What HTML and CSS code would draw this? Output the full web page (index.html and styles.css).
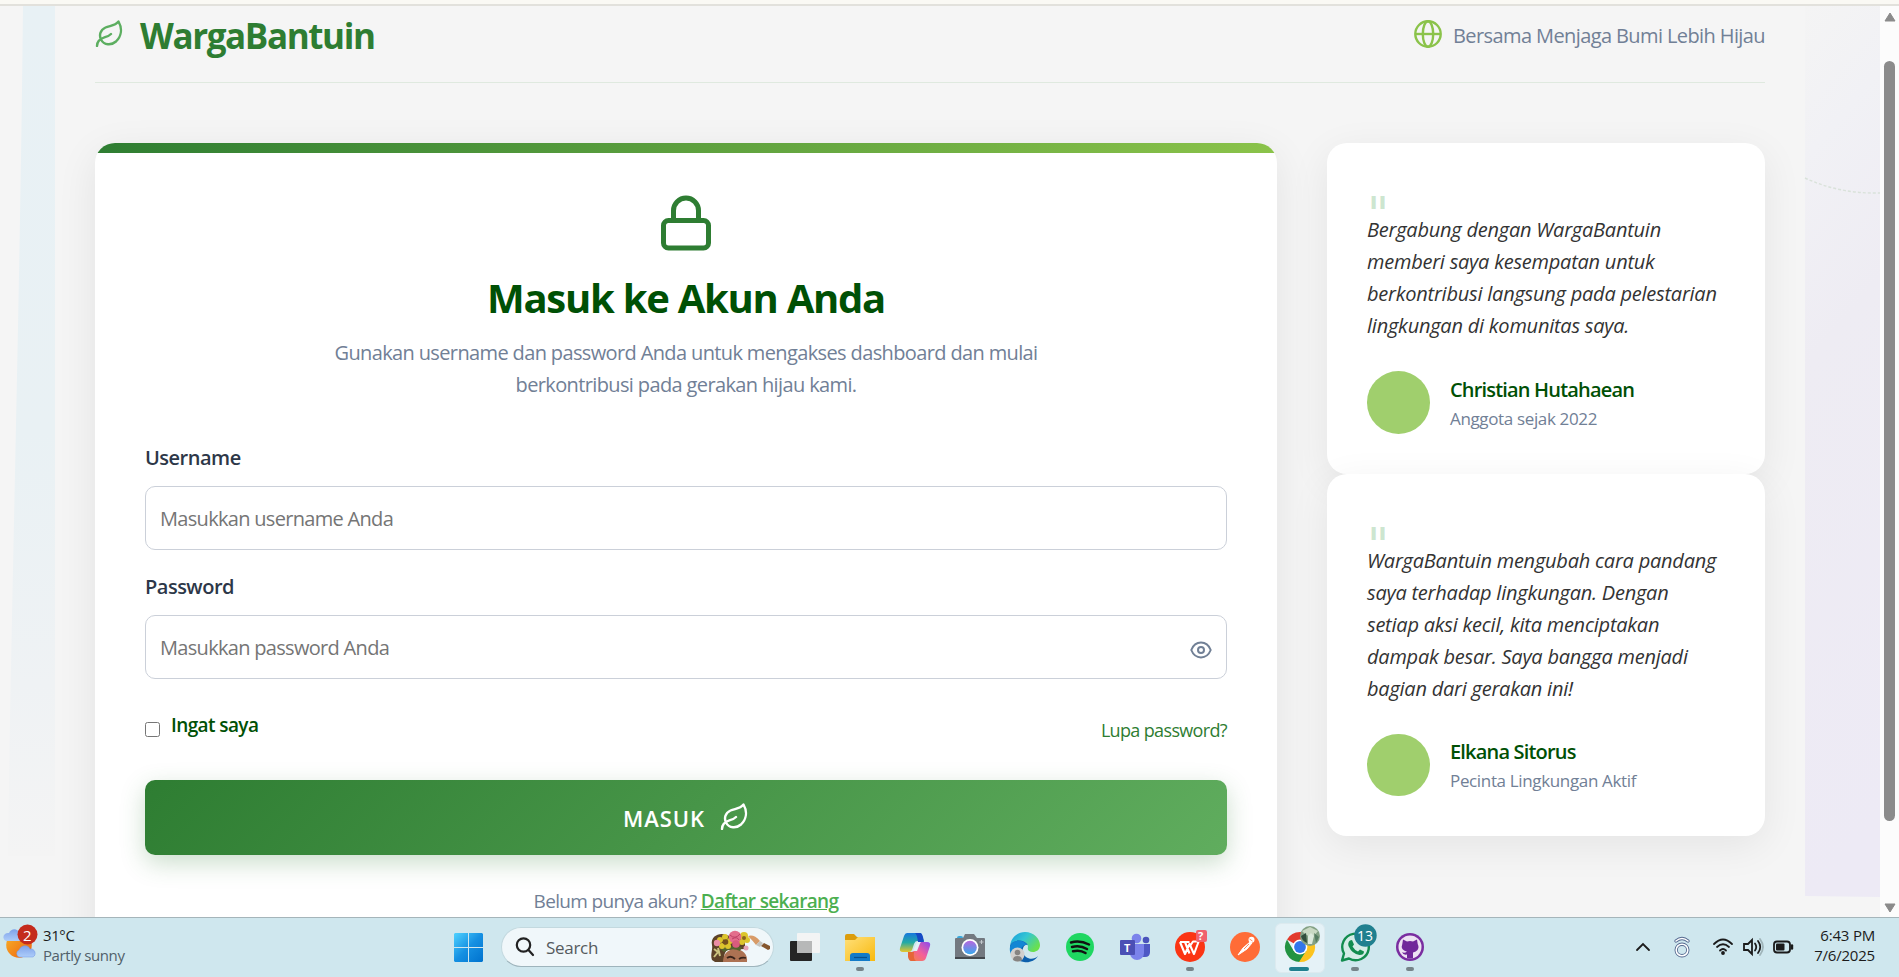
FILE: index.html
```html
<!DOCTYPE html>
<html lang="id">
<head>
<meta charset="utf-8">
<title>WargaBantuin</title>
<link rel="stylesheet" href="styles.css">
</head>
<body>
<div class="screen">
  <div class="chrome-edge"></div>
  <div class="viewport">
    <div class="page">
      <svg class="deco deco-left" viewBox="0 0 55 850" width="55" height="850">
        <defs><linearGradient id="dl" x1="0" y1="0" x2="0" y2="1"><stop offset="0" stop-color="#e8f1f5"/><stop offset=".5" stop-color="#e9f1f4"/><stop offset=".8" stop-color="#eff2f4"/><stop offset="1" stop-color="#f4f4f4"/></linearGradient></defs>
        <path d="M23 0H55V850H8C11 600 20 300 23 0Z" fill="url(#dl)"/>
      </svg>
      <svg class="deco deco-right" viewBox="0 0 75 891" width="75" height="891">
        <defs><linearGradient id="dr" x1="0" y1="0" x2=".1" y2="1"><stop offset="0" stop-color="#f4f4f4"/><stop offset=".17" stop-color="#f1f1f5"/><stop offset=".4" stop-color="#eeecf3"/><stop offset="1" stop-color="#edeaf5"/></linearGradient></defs>
        <path d="M0 0H75V891L0 890Z" fill="url(#dr)"/>
        <path d="M0 172Q34 188 75 187" fill="none" stroke="#d9e2da" stroke-width="1.4" stroke-dasharray="3 2"/>
      </svg>
      <header class="header">
        <div class="brand">
          <svg class="brand-icon" viewBox="0 0 28 28" width="28" height="28"><use href="#leaf"/></svg>
          <span class="brand-name">WargaBantuin</span>
        </div>
        <div class="tagline">
          <svg viewBox="0 0 28 28" width="28" height="28" fill="none" stroke="#8bc34a" stroke-width="2.4"><circle cx="14" cy="14" r="12.7"/><ellipse cx="14" cy="14" rx="5.2" ry="12.7"/><path d="M1.3 14H26.7"/></svg>
          <span class="tagline-text">Bersama Menjaga Bumi Lebih Hijau</span>
        </div>
      </header>
      <main class="main">
        <section class="login">
          <svg class="lock" viewBox="0 0 24 24" width="60" height="60" fill="none" stroke="#2e7d32" stroke-width="2" stroke-linecap="round" stroke-linejoin="round"><rect x="3" y="11" width="18" height="11" rx="2"/><path d="M7 11V7a5 5 0 0 1 10 0v4"/></svg>
          <h1 class="title">Masuk ke Akun Anda</h1>
          <p class="subtitle">Gunakan username dan password Anda untuk mengakses dashboard dan mulai<br>berkontribusi pada gerakan hijau kami.</p>
          <form class="form">
            <label class="label label-user">Username</label>
            <div class="field"><span class="placeholder">Masukkan username Anda</span></div>
            <label class="label label-pass">Password</label>
            <div class="field"><span class="placeholder">Masukkan password Anda</span>
              <svg class="eye" viewBox="0 0 22 18" width="22" height="18" fill="none" stroke="#718096" stroke-width="2"><path d="M1.300 9C3.200 4.200 6.800 1.600 11 1.600S18.800 4.200 20.700 9C18.800 13.800 15.200 16.400 11 16.400S3.200 13.800 1.300 9Z"/><circle cx="11" cy="9" r="3"/></svg>
            </div>
            <div class="options">
              <span class="remember"><input type="checkbox" class="check"><span class="remember-text">Ingat saya</span></span>
              <a class="forgot">Lupa password?</a>
            </div>
            <div class="submit"><span class="submit-text">MASUK</span><svg class="submit-icon" viewBox="0 0 28 28" width="28" height="28"><use href="#leaf"/></svg></div>
          </form>
          <p class="register"><span class="register-q">Belum punya akun?</span> <a class="register-link">Daftar sekarang</a></p>
        </section>
        <aside class="side">
          <article class="card">
            <div class="mark">"</div>
            <p class="quote">Bergabung dengan WargaBantuin<br>memberi saya kesempatan untuk<br>berkontribusi langsung pada pelestarian<br>lingkungan di komunitas saya.</p>
            <div class="author"><div class="avatar"></div><div><div class="name">Christian Hutahaean</div><div class="role">Anggota sejak 2022</div></div></div>
          </article>
          <article class="card">
            <div class="mark">"</div>
            <p class="quote">WargaBantuin mengubah cara pandang<br>saya terhadap lingkungan. Dengan<br>setiap aksi kecil, kita menciptakan<br>dampak besar. Saya bangga menjadi<br>bagian dari gerakan ini!</p>
            <div class="author"><div class="avatar"></div><div><div class="name">Elkana Sitorus</div><div class="role">Pecinta Lingkungan Aktif</div></div></div>
          </article>
        </aside>
      </main>
    </div>
    <div class="scrollbar">
      <svg class="arrow-up" viewBox="0 0 12 10" width="12" height="10"><path d="M6 1L11 9H1Z" fill="#8b8b8b" stroke="#8b8b8b" stroke-linejoin="round"/></svg>
      <div class="thumb"></div>
      <svg class="arrow-down" viewBox="0 0 12 10" width="12" height="10"><path d="M6 9L11 1H1Z" fill="#8b8b8b" stroke="#8b8b8b" stroke-linejoin="round"/></svg>
    </div>
  </div>
  <footer class="taskbar">
    <div class="weather">
      <svg viewBox="0 0 36 40" width="36" height="40"><defs><linearGradient id="sun" x1="0" y1="0" x2="1" y2="1"><stop offset="0" stop-color="#f7b52c"/><stop offset="1" stop-color="#ee5f0c"/></linearGradient><linearGradient id="cl" x1="0" y1="0" x2="0" y2="1"><stop offset="0" stop-color="#7fa2ea"/><stop offset="1" stop-color="#adcdfa"/></linearGradient></defs>
      <circle cx="16" cy="25" r="12.800" fill="url(#sun)"/><path d="M3 21a4 4 0 0 1-1-7 5 5 0 0 1 4-1c2-5 9-5 10 0 5 0 6 7 2 8Z" fill="url(#cl)"/><path d="M16 37a3.800 3.800 0 0 1 0-7c2-5 9-6 11-1 5-1 7 6 3 8Z" fill="url(#cl)" stroke="#7096e4" stroke-width=".5"/>
      <circle cx="24.500" cy="14.500" r="10" fill="#c42b1c"/></svg>
      <span class="weather-badge">2</span>
      <div class="weather-text"><div class="temp">31°C</div><div class="cond">Partly sunny</div></div>
    </div>
    <svg class="start" viewBox="0 0 29 29" width="29" height="29"><defs><linearGradient id="win" x1="0" y1="0" x2="1" y2="1" gradientUnits="objectBoundingBox"><stop offset="0" stop-color="#4fd2ff"/><stop offset=".5" stop-color="#1590e2"/><stop offset="1" stop-color="#0072ce"/></linearGradient></defs><path d="M1 0H14V14H0V1ZM15 0H28L29 1V14H15ZM0 15H14V29H1L0 28ZM15 15H29V28L28 29H15Z" fill="url(#win)"/></svg>
    <div class="search">
      <svg viewBox="0 0 20 20" width="20" height="20" fill="none" stroke="#222" stroke-width="2.200" stroke-linecap="round"><circle cx="8.500" cy="8" r="6.700"/><path d="M13.500 13L18 18"/></svg>
      <span class="search-text">Search</span>
      <svg class="search-art" viewBox="0 0 61 32" width="61" height="32">
        <path d="M2 29C0 23 3 19 2 14 0 5 10 1 16 4L35 9V18L17 19C14 22 14 26 14 31H5Z" fill="#5d4228"/>
        <path d="M13 31C13 23 18 18 25 18 32 18 38 23 37 31Z" fill="#ad7253"/><path d="M17 27Q21 24 25 28M29 28Q32 26 36 27" stroke="#3a241b" stroke-width="1.800" fill="none"/>
        <path d="M10 18Q19 13 32 16L30 20Q22 16 14 21Z" fill="#53632d"/>
        <g fill="#dcc52c"><circle cx="15" cy="6" r="3"/><circle cx="20" cy="10" r="3"/><circle cx="18" cy="15" r="3"/><circle cx="12" cy="15" r="3"/><circle cx="10" cy="9" r="3"/><circle cx="34" cy="5" r="4"/><circle cx="37" cy="9" r="3"/><circle cx="32" cy="11" r="3"/></g><circle cx="15.500" cy="11" r="2.800" fill="#75511c"/><circle cx="34" cy="7" r="2" fill="#896420"/>
        <circle cx="25" cy="6" r="6.300" fill="#e36e8c"/><path d="M20 4Q25 9 30 3M22 8Q27 5 29 9" stroke="#bd3f66" fill="none"/><circle cx="26" cy="13" r="3.800" fill="#d85b7d"/><circle cx="7" cy="12" r="3.200" fill="#eb8da4"/><circle cx="36" cy="17" r="2.500" fill="#e5a3b4"/><path d="M4 18L8 21 4 26M8 17L10 25" stroke="#cbc37f" stroke-width="2" fill="none"/>
        <path d="M38 5Q44 3 50 10L46 14Q43 10 38 5Z" fill="#d89b68"/><path d="M46 14L50 10 53 12 50 16Z" fill="#c4c4c0"/><path d="M51 15L54 12 60 15V18L58 19Z" fill="#85562e"/>
      </svg>
    </div>
    <div class="apps">
      <div class="app"><svg viewBox="0 0 32 32" width="32" height="32"><rect x="1" y="10" width="22" height="20" rx="1" fill="#252525"/><rect x="8" y="2" width="23" height="20" rx="1" fill="#f3f4f4"/><path d="M8 10H23V22H8Z" fill="#b7b8b8"/></svg></div>
      <div class="app run"><svg viewBox="0 0 32 32" width="32" height="32"><defs><linearGradient id="fo" x1="0" y1="0" x2="1" y2="1"><stop offset="0" stop-color="#ffe07a"/><stop offset="1" stop-color="#f8b90e"/></linearGradient></defs><path d="M1 5q0-2 2-2h7l3 3h17v8H1Z" fill="#dc9d0c"/><path d="M1 9h10l3-3h17v24H1Z" fill="url(#fo)"/><path d="M6 30v-5q0-3 3-3h14q3 0 3 3v5Z" fill="#127bc8"/><path d="M10 26.500h13" stroke="#07508c" stroke-width="1.200"/></svg></div>
      <div class="app"><svg viewBox="0 0 32 32" width="32" height="32"><defs><linearGradient id="c1" x1="0" y1="0" x2="0" y2="1"><stop offset="0" stop-color="#1878dd"/><stop offset=".5" stop-color="#23aaa5"/><stop offset="1" stop-color="#e7c62b"/></linearGradient><linearGradient id="c2" x1="1" y1="0" x2="0" y2="1"><stop offset="0" stop-color="#8a4af0"/><stop offset=".5" stop-color="#f45f99"/><stop offset="1" stop-color="#f58b35"/></linearGradient></defs><path d="M8 2h14l3 8h-7q-2 0-3 3l-2 6q-1 2-3 2H4q-4 0-3-4L5 5q1-3 3-3Z" fill="url(#c1)"/><path d="M16 2h5q2 0 3 4l1 5h-6q-1-8-3-9Z" fill="#164ac5"/><path d="M20 11h8q4 0 3 4l-4 12q-1 3-4 3H12l-3-9h3q3 0 4-3l2-5q1-2 2-2Z" fill="url(#c2)"/><path d="M18 11h4q-1 1-2 4l-2 5h-4Z" fill="#e3f2f6"/><path d="M9 21h6q-1 7 2 9h-5q-2 0-3-4Z" fill="#e56637"/></svg></div>
      <div class="app"><svg viewBox="0 0 32 32" width="32" height="32"><defs><linearGradient id="ca" x1="0" y1="0" x2="0" y2="1"><stop offset="0" stop-color="#b867df"/><stop offset="1" stop-color="#38a9ec"/></linearGradient></defs><rect x="3" y="5" width="6" height="6" rx="2" fill="#3aa8dc"/><path d="M1 8q0-1 1-1h7l2-4h9l3 4h7q1 0 1 1v19H1Z" fill="#737980"/><path d="M1 26h30v2H1Z" fill="#43484d"/><circle cx="16" cy="16.500" r="8.500" fill="#fff"/><circle cx="16" cy="16.500" r="6.800" fill="url(#ca)"/><path d="M27.500 9v4M25.500 11h4" stroke="#c3c8cc"/></svg></div>
      <div class="app"><svg viewBox="0 0 32 32" width="32" height="32"><defs><linearGradient id="ed" x1="0" y1="0" x2="1" y2=".6"><stop offset="0" stop-color="#169adf"/><stop offset=".5" stop-color="#34c6d2"/><stop offset="1" stop-color="#6ae04e"/></linearGradient></defs><path d="M1 15C2 6 9 1 16 1 25 1 31 8 31 14 31 19 27 21 24 21 20 21 18 19 19 16 19 13 16 10 11 10 6 10 2 12 1 15Z" fill="url(#ed)"/><path d="M1 15C3 8 15 8 19 14 14 12 11 22 17 26 21 29 26 28 29 25 26 30 20 32 15 31 7 30 1 25 1 15Z" fill="#0c5fac"/><path d="M1 16C3 8 15 8 18 14 12 13 10 21 15 26L4 26Q0 22 1 16Z" fill="#1386d4"/><circle cx="8.500" cy="23.500" r="7" fill="#d1cfcd"/><circle cx="8.500" cy="21.500" r="2.800" fill="#868482"/><path d="M4 29q0-4 4.500-4t4.500 4q-4 3-9 0Z" fill="#868482"/></svg></div>
      <div class="app"><svg viewBox="0 0 32 32" width="32" height="32"><circle cx="16" cy="16" r="14" fill="#1fd761"/><path d="M7 11.500Q16 9 25 13.500M8 16Q16 13.800 23 18M9 20.300Q16 18.500 21.500 22" fill="none" stroke="#111" stroke-width="2.500" stroke-linecap="round"/></svg></div>
      <div class="app"><svg viewBox="0 0 32 32" width="32" height="32"><circle cx="27" cy="9" r="3.300" fill="#4a53bb"/><path d="M21 13h10v8q0 5-5 5h-5Z" fill="#4e58c4"/><circle cx="17.500" cy="7.500" r="4.800" fill="#7b83eb"/><path d="M11 13h14v9a7 7 0 0 1-14 0Z" fill="#7b83eb"/><rect x="1" y="9" width="15" height="15" rx="1" fill="#4b50b5"/></svg><span class="teams-t">T</span></div>
      <div class="app run"><svg viewBox="0 0 32 32" width="32" height="32"><circle cx="16" cy="16" r="15" fill="#fb3514"/><path d="M6 11h9.500M6 11l5 12 4.500-10 4.500 10 5-13.500M11 11l4.500 11.500M16 15l3-4.500h6" fill="none" stroke="#fff" stroke-width="2.100" stroke-linejoin="round"/><rect x="22" y="-1" width="11" height="12" rx="2" fill="#f0626d"/></svg><span class="wps-q">?</span></div>
      <div class="app"><svg viewBox="0 0 32 32" width="32" height="32"><circle cx="16" cy="16" r="15" fill="#ff6c37"/><circle cx="22.500" cy="8.800" r="3" fill="#fff"/><path d="M21 11L14 17 9 24 18 18 23 12Z" fill="#fff" stroke="#fff" stroke-linejoin="round"/><path d="M20 13l-5 5M20.500 8l3 2" stroke="#ff6c37" stroke-width=".8"/></svg></div>
      <div class="app active"><svg viewBox="0 0 32 32" width="32" height="32"><path d="M3 8.500A15 15 0 0 1 29 8.500L16 16Z" fill="#e23a2d"/><path d="M3 8.500A15 15 0 0 0 16 31L22.500 19.500 9.500 19.500Z" fill="#229342"/><path d="M29 8.500A15 15 0 0 1 15 31L22.500 19.500 19 9H29Z" fill="#fcc31e"/><circle cx="16" cy="16" r="7.400" fill="#fff"/><circle cx="16" cy="16" r="5.900" fill="#3176eb"/></svg><svg class="profile" viewBox="0 0 20 20" width="20" height="20"><circle cx="10" cy="10" r="10" fill="#83a184"/><path d="M2 5L10 1 18 5 12 12 5 8Z" fill="#c9d9c3"/><path d="M1 10L6 7 7 17Q2 15 1 10Z" fill="#314e3c"/><path d="M8 10l3-3 3 3-2 8H8Z" fill="#dce9dc"/><path d="M14 7l5 4-3 6Z" fill="#547c62"/></svg></div>
      <div class="app run"><svg viewBox="0 0 32 32" width="32" height="32"><path d="M3 29.500L5 22.500A13.300 13.300 0 1 1 10 27.500Z" fill="#d5ece7" stroke="#128c4e" stroke-width="2.400" stroke-linejoin="round"/><path d="M11 9.500l2-.5 2 4.500-1.500 2Q15.500 19 19 20.500l2-2 4 2q0 3.500-4.500 3.500Q13 23 9.500 15 8.500 11.500 11 9.500Z" fill="#128c4e"/><circle cx="26.500" cy="4.500" r="11.200" fill="#20808f"/></svg><span class="wa-badge">13</span></div>
      <div class="app run"><svg viewBox="0 0 32 32" width="32" height="32"><circle cx="16" cy="16" r="14" fill="#7a2da0"/><circle cx="16" cy="16" r="11.500" fill="#eee2f3"/><path d="M9 8.500l4 2q3-.8 6 0l4-2 .7 4.500q2.500 5-2 7.500l-2.700 1v6h-6v-4q-4 .8-5-2.500 2 1.500 5-.2-7-2-4.700-7.800Z" fill="#71289a"/></svg></div>
    </div>
    <div class="tray">
      <svg viewBox="0 0 165 24" width="165" height="24" fill="none" stroke="#1b1b1b" stroke-width="1.800" stroke-linecap="round">
        <path d="M5 15L11 9 17 15"/>
        <g stroke="#54688f" stroke-width="3.400"><circle cx="50" cy="15" r="5.800"/><path d="M44 6Q50 1 56 6"/></g><g stroke="#fff" stroke-width="1.600"><circle cx="50" cy="15" r="5.800"/><path d="M44 6Q50 1 56 6"/></g>
        <path d="M82 9Q91 0 100 9M85 12Q91 6.500 97 12M88 15.500Q91 12.500 94 15.500"/><circle cx="91" cy="18" r="1" fill="#1b1b1b"/>
        <path d="M112 9h4l4-4v14l-4-4h-4ZM123 8.500q2.500 3.500 0 7M126 6q4.500 6 0 12"/><path d="M128 4q6 8 0 16" stroke="#9fb4b9"/>
        <rect x="142" y="6.500" width="16" height="11" rx="3"/><rect x="144" y="8.500" width="8.500" height="7" rx="1" fill="#1b1b1b" stroke="none"/><path d="M160 10.500v3" stroke-width="2.400"/>
      </svg>
    </div>
    <div class="clock"><div class="time">6:43 PM</div><div class="date">7/6/2025</div></div>
  </footer>
</div>
<svg width="0" height="0" class="defs"><symbol id="leaf" viewBox="0 0 28 28"><path d="M23.500 2.500C20 7 15 6.500 10.500 8.500 5 11 4 16.500 6 20.500 9 26.500 16.500 26.500 21 22.500 26.500 17 27.500 9.500 23.500 2.500ZM2 27C2 21 7.500 19 10 18.200 12.500 17.500 14.500 16.500 16 15" fill="none" stroke="currentColor" stroke-width="2.400" stroke-linecap="round" stroke-linejoin="round"/></symbol></svg>
</body>
</html>
```
FILE: styles.css
```css
* { box-sizing: border-box; }
body { margin: 0; font-family: "Open Sans", "Noto Sans", sans-serif; font-size: 20px; color: #333; overflow: hidden; }
p, h1 { margin: 0; }
svg { display: block; flex: none; overflow: visible; }
.defs { position: absolute; }
.screen { width: 1899px; height: 977px; overflow: hidden; display: grid; grid-template-rows: 6px 911px 60px; background: #f4f4f4; white-space: nowrap; }
.chrome-edge { background: #faf9f4; border-bottom: 2px solid #e2e1dc; }
.viewport { display: flex; min-height: 0; overflow: hidden; }
.page { position: relative; width: 1880px; padding: 0 115px 0 95px; background: #f5f5f5; overflow: hidden; }
.deco { position: absolute; top: 0; }
.deco-left { left: 0; }
.deco-right { right: 0; }
.header { position: relative; height: 77px; width: 1670px; display: flex; justify-content: space-between; border-bottom: 1px solid #dfe9df; }
.brand { display: flex; color: #5cae60; }
.brand-icon { margin-top: 13px; }
.brand-name { margin-left: 17px; line-height: 60px; font-size: 35px; font-weight: 700; color: #2e7d32; letter-spacing: -1.4px; }
.tagline { display: flex; gap: 11px; padding-top: 14px; color: #718096; }
.tagline-text { line-height: 31px; letter-spacing: -0.6px; }
.main { position: relative; display: flex; gap: 50px; margin-top: 60px; width: 1670px; }
.login { position: relative; width: 1182px; height: 860px; padding: 50px; border-radius: 20px; background: #fff; box-shadow: 0 10px 40px rgba(0,0,0,.08); display: flex; flex-direction: column; }
.login::before { content: ""; position: absolute; inset: 0; border-radius: 20px; background: linear-gradient(135deg, #2e7d32, #8bc34a) 0 0 / 100% 10px no-repeat; }
.lock { align-self: center; }
.title { margin-top: 16px; line-height: 58px; text-align: center; font-size: 40px; font-weight: 700; color: #005005; letter-spacing: -1.27px; }
.subtitle { margin-top: 10px; text-align: center; line-height: 32px; color: #718096; letter-spacing: -0.63px; }
.form { margin-top: 41px; display: flex; flex-direction: column; }
.label { line-height: 32px; font-weight: 600; color: #2d3748; letter-spacing: -0.5px; }
.field { height: 64px; margin-top: 12px; padding: 0 14px; border: 1px solid #cbd0d9; border-radius: 10px; display: flex; align-items: center; justify-content: space-between; color: #757575; letter-spacing: -0.69px; }
.label-pass { margin-top: 21px; }
.eye { margin-top: 5px; }
.options { margin-top: 35px; height: 66px; display: flex; justify-content: space-between; }
.remember { display: flex; }
.check { width: 15px; height: 15px; margin: 8px 11px 0 0; }
.remember-text { line-height: 23px; font-size: 19px; font-weight: 600; color: #005005; letter-spacing: -0.6px; }
.forgot { line-height: 32px; font-size: 18px; color: #2e7d32; letter-spacing: -0.65px; }
.submit { height: 75px; border-radius: 10px; background: linear-gradient(135deg, #2e7d32, #60ad5e); box-shadow: 0 8px 25px rgba(46,125,50,.25); color: #fff; display: flex; justify-content: center; align-items: center; gap: 15px; padding-right: 1px; }
.submit-text { font-size: 22px; font-weight: 600; letter-spacing: 0.9px; }
.submit-icon { margin-top: -3px; }
.register { margin-top: 31px; text-align: center; font-size: 19px; line-height: 30px; color: #718096; letter-spacing: -0.65px; }
.register-link { color: #4caf50; font-weight: 600; text-decoration: underline; }
.side { width: 438px; }
.card { padding: 40px; border-radius: 20px; background: #fff; box-shadow: 0 10px 40px rgba(0,0,0,.07); }
.mark { height: 31px; line-height: 63px; font-family: "DejaVu Sans", sans-serif; font-size: 48px; color: #cde6d0; }
.quote { font-style: italic; line-height: 32px; letter-spacing: -0.23px; color: #333; }
.author { display: flex; align-items: center; gap: 20px; margin-top: 29px; height: 62.5px; }
.avatar { width: 63px; height: 62.5px; border-radius: 50%; background: #a0cf6d; }
.name { line-height: 34px; margin-bottom: -2px; font-weight: 600; color: #005005; letter-spacing: -0.82px; }
.role { line-height: 27px; font-size: 17px; color: #718096; letter-spacing: -0.35px; }
.scrollbar { width: 19px; background: #fcfcfc; display: flex; flex-direction: column; align-items: center; padding: 6px 0 4px; }
.thumb { width: 11px; height: 760px; margin-top: 39px; border-radius: 6px; background: #8b8b8b; }
.arrow-down { margin-top: auto; }
.taskbar { position: relative; display: flex; background: #cfe7ee; border-top: 1px solid #a5b5ba; }
.weather { position: relative; width: 454px; display: flex; padding: 2px 0 0 3px; }
.weather-badge { position: absolute; left: 23px; top: 7px; font-size: 15px; line-height: 20px; color: #fff; }
.weather-text { margin-left: 4px; padding-top: 5px; font-size: 15px; line-height: 20px; color: #1b1b1b; letter-spacing: -0.4px; }
.cond { color: #51606a; }
.start { margin-top: 15px; }
.search { margin: 9px 0 0 18px; width: 273px; height: 40px; border-radius: 20px; background: #f0f7fa; border: 1px solid #c3d9df; border-bottom-color: #9eb4bc; display: flex; align-items: center; padding: 0 2px 0 13px; }
.search-text { margin-left: 11px; font-size: 17px; color: #555b5e; letter-spacing: -0.3px; }
.search-art { margin-left: auto; }
.apps { display: flex; margin-left: 3px; }
.app { position: relative; width: 55px; padding: 13px 11.5px 0; }
.run::after, .active::after { content: ""; position: absolute; left: 23.5px; top: 49px; width: 8px; height: 4px; border-radius: 2px; background: #768489; }
.active::before { content: ""; position: absolute; left: 3px; top: 5px; width: 48px; height: 48px; border-radius: 6px; background: #e5f2f7; border: 1px solid #dceaef; }
.active svg { position: relative; }
.active::after { left: 17px; width: 20px; background: #20808f; }
.active .profile { position: absolute; left: 28px; top: 8px; }
.teams-t, .wps-q, .wa-badge { position: absolute; color: #fff; font-weight: 700; font-size: 11px; line-height: 15px; }
.teams-t { left: 17px; top: 22px; }
.wps-q { left: 36px; top: 10px; }
.wa-badge { left: 30px; top: 8px; font-size: 14px; font-weight: 400; line-height: 20px; }
.tray { margin-left: 195px; padding-top: 17px; }
.clock { position: absolute; right: 24px; top: 7px; text-align: right; font-size: 15px; line-height: 20px; color: #1b1b1b; letter-spacing: -0.2px; }
```
